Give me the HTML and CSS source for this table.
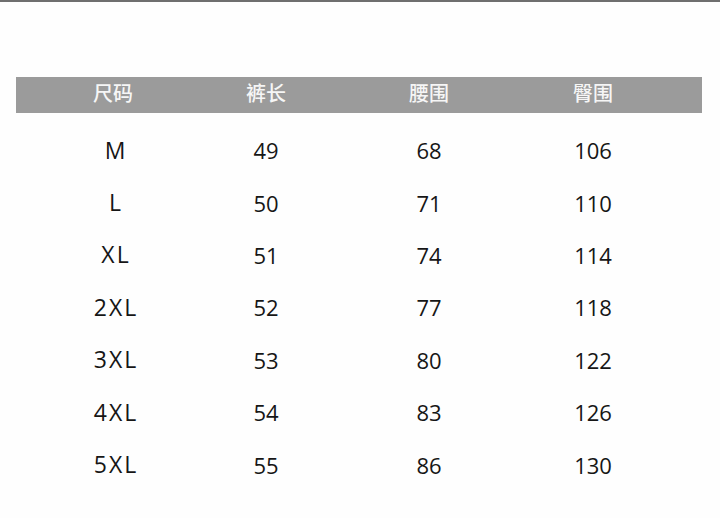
FILE: index.html
```html
<!DOCTYPE html>
<html lang="zh">
<head>
<meta charset="utf-8">
<title>尺码表</title>
<link rel="stylesheet" href="styles.css">
</head>
<body>
<div class="page">
  <div class="table">
    <div class="head">
      <div class="cell">尺码</div>
      <div class="cell">裤长</div>
      <div class="cell">腰围</div>
      <div class="cell">臀围</div>
    </div>
    <div class="rows">
      <div class="row"><div class="cell">M</div><div class="cell">49</div><div class="cell">68</div><div class="cell">106</div></div>
      <div class="row"><div class="cell">L</div><div class="cell">50</div><div class="cell">71</div><div class="cell">110</div></div>
      <div class="row"><div class="cell">XL</div><div class="cell">51</div><div class="cell">74</div><div class="cell">114</div></div>
      <div class="row"><div class="cell">2XL</div><div class="cell">52</div><div class="cell">77</div><div class="cell">118</div></div>
      <div class="row"><div class="cell">3XL</div><div class="cell">53</div><div class="cell">80</div><div class="cell">122</div></div>
      <div class="row"><div class="cell">4XL</div><div class="cell">54</div><div class="cell">83</div><div class="cell">126</div></div>
      <div class="row"><div class="cell">5XL</div><div class="cell">55</div><div class="cell">86</div><div class="cell">130</div></div>
    </div>
  </div>
</div>
</body>
</html>
```

FILE: styles.css
```css
* { box-sizing: border-box; margin: 0; padding: 0; }
html, body { width: 720px; height: 518px; overflow: hidden; background: #fefefe; }
body {
  font-family: "Open Sans", "Noto Sans CJK SC", sans-serif;
  color: #161616;
}
.page {
  border-top: 2px solid #6f6f6f;
  padding: 75px 18px 0 16px;
}
.table { width: 686px; }
.head, .row {
  display: grid;
  grid-template-columns: 194px 112px 214px 114px;
  align-items: center;
}
.head {
  height: 36px;
  background: #9b9b9b;
  color: #f6f6f6;
  font-family: "Noto Sans CJK SC", sans-serif;
  font-size: 20px;
  font-weight: 500;
  line-height: 1;
}
.head .cell { text-align: center; padding-bottom: 5px; }
.rows { padding-top: 11px; }
.row {
  height: 52.4px;
  font-size: 22px;
  line-height: 1;
}
.row .cell { text-align: center; }
.row .cell:first-child { padding-left: 6px; font-size: 23px; letter-spacing: 2px; }
```
